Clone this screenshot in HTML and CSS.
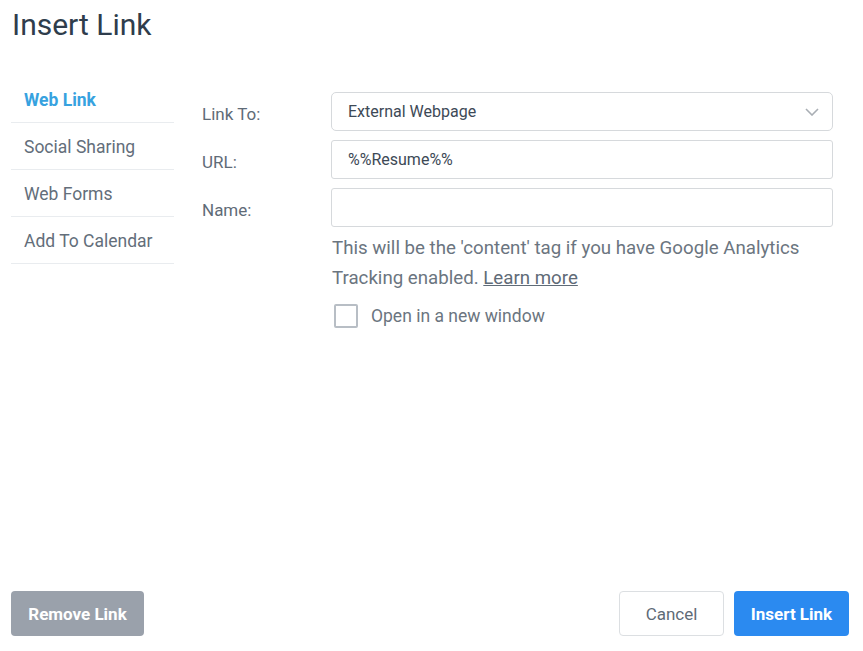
FILE: index.html
```html
<!DOCTYPE html>
<html lang="en">

<head>
  <meta charset="UTF-8">
  <meta name="viewport" content="width=device-width, initial-scale=1.0">
  <title>Insert Link</title>
  <link rel="stylesheet" href="styles.css">
</head>

<body>
  <div class="dialog">
    <h1 class="dialog-title">Insert Link</h1>

    <div class="dialog-body">
      <!-- link type tabs -->
      <ul class="tabs">
        <li class="tab active">Web Link</li>
        <li class="tab">Social Sharing</li>
        <li class="tab">Web Forms</li>
        <li class="tab">Add To Calendar</li>
      </ul>

      <form class="link-form" onsubmit="event.preventDefault()">
        <div class="fields">
          <div class="field">
            <label class="field-label">Link To:</label>
            <div class="select">
              <span>External Webpage</span>
              <svg class="chevron" width="14" height="8" viewBox="0 0 14 8">
                <path d="M1 1l6 6 6-6" fill="none" stroke="#a9aeb4" stroke-width="1.6"/>
              </svg>
            </div>
          </div>
          <div class="field">
            <label class="field-label">URL:</label>
            <input class="text-input" type="text" value="%%Resume%%">
          </div>
          <div class="field">
            <label class="field-label">Name:</label>
            <input class="text-input" type="text">
          </div>
        </div>

        <div class="field-extra">
          <p class="hint">This will be the 'content' tag if you have Google Analytics Tracking enabled. <a href="#">Learn more</a></p>
          <label class="check">
            <span class="check-box"></span>
            Open in a new window
          </label>
        </div>
      </form>
    </div>

    <div class="dialog-footer">
      <button class="btn btn-muted" type="button">Remove Link</button>
      <div class="footer-right">
        <button class="btn btn-plain" type="button">Cancel</button>
        <button class="btn btn-primary" type="button">Insert Link</button>
      </div>
    </div>
  </div>
</body>

</html>
```

FILE: styles.css
```css
body {
  margin: 0;
  padding: 0;
  background-color: #ffffff;
  font-family: Roboto, "Liberation Sans", Arial, sans-serif;
  color: #5f6b77;
}

.dialog {
  height: 651px;
  box-sizing: border-box;
  display: flex;
  flex-direction: column;
  padding: 0 14px 15px 11px;
}

.dialog-title {
  margin: 0;
  padding: 6px 0 0 1px;
  font-size: 30px;
  font-weight: 400;
  line-height: 38px;
  color: #2f3d4c;
}

.dialog-body {
  flex: 1;
  display: flex;
  padding-top: 32px;
}

/* left hand tabs */
.tabs {
  list-style: none;
  margin: 0;
  padding: 0;
  width: 163px;
}

.tab {
  height: 46px;
  line-height: 48px;
  padding-left: 13px;
  font-size: 17.5px;
  border-bottom: 1px solid #e9ecef;
  color: #636e7a;
}

.tab.active {
  color: #37a2df;
  font-weight: 700;
}

.link-form {
  flex: 1;
  padding: 16px 0 0 28px;
}

.fields {
  display: flex;
  flex-direction: column;
  gap: 9px;
}

.field {
  display: flex;
  align-items: center;
}

.field-label {
  width: 129px;
  padding-top: 5px;
  font-size: 17px;
  color: #5f6b77;
}

.select,
.text-input {
  width: 502px;
  height: 39px;
  box-sizing: border-box;
  border: 1px solid #d6d9dc;
  border-radius: 3px;
  padding: 0 16px;
  font-family: inherit;
  font-size: 16px;
  color: #3d4956;
  background: #ffffff;
}

.select {
  display: flex;
  align-items: center;
  justify-content: space-between;
  border-radius: 5px;
  padding-right: 13px;
}

.text-input {
  outline: none;
}

.field-extra {
  padding-left: 130px;
}

.hint {
  margin: 0;
  padding-top: 6px;
  font-size: 18.7px;
  line-height: 30px;
  color: #6b7580;
  width: 490px;
}

.hint a {
  color: #5f6b77;
  text-decoration: underline;
}

.check {
  display: flex;
  align-items: center;
  gap: 13px;
  margin-top: 11px;
  padding-left: 2px;
  font-size: 17.5px;
  color: #6b7580;
}

.check-box {
  width: 24px;
  height: 24px;
  box-sizing: border-box;
  border: 2px solid #b8bec5;
  border-radius: 2px;
}

.dialog-footer {
  display: flex;
  justify-content: space-between;
  align-items: center;
}

.footer-right {
  display: flex;
  gap: 10px;
}

.btn {
  height: 45px;
  border-radius: 4px;
  font-family: inherit;
  font-size: 17px;
  cursor: pointer;
  border: 1px solid transparent;
  padding: 0;
  white-space: nowrap;
}

.btn-muted {
  width: 133px;
  background-color: #9aa1ab;
  color: #ffffff;
  font-weight: 700;
}

.btn-plain {
  width: 105px;
  background-color: #ffffff;
  border-color: #dcdfe2;
  color: #5f6b77;
}

.btn-primary {
  width: 115px;
  background-color: #2b8af0;
  color: #ffffff;
  font-weight: 700;
}
```
